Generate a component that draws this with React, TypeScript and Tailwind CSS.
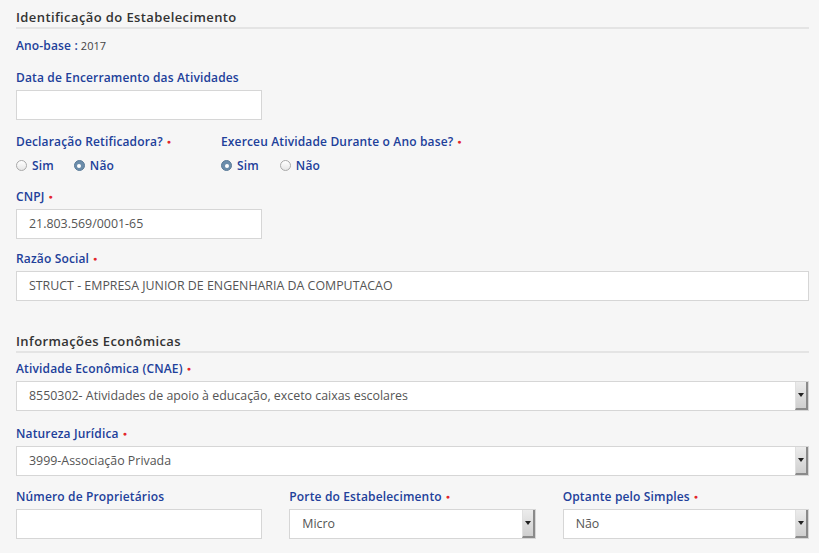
import React from "react";

const font = { fontFamily: '"Open Sans", "Liberation Sans", sans-serif' };

function Req() {
  return <span className="ml-[4px] text-[7px] text-[#e3262c] align-[2px]">●</span>;
}

function Label({ text, required }: { text: string; required?: boolean }) {
  return (
    <div className="text-[12px] leading-[17px] font-semibold tracking-[0.15px] text-[#21409a] whitespace-nowrap">
      {text}
      {required && <Req />}
    </div>
  );
}

function Input({ value, className = "" }: { value?: string; className?: string }) {
  return (
    <div
      className={`mt-[4px] h-[30px] border border-[#d6d6d6] bg-white px-[12px] flex items-center text-[12.4px] text-[#555] ${className}`}
    >
      {value}
    </div>
  );
}

function Select({ value }: { value: string }) {
  return (
    <div className="mt-[4px] h-[30px] border border-[#d6d6d6] bg-white flex items-stretch text-[12.4px] text-[#555]">
      <div className="flex-1 flex items-center px-[12px] whitespace-nowrap overflow-hidden">{value}</div>
      <div className="w-[13px] bg-gradient-to-b from-[#ececec] to-[#cfcfcf] border-r-2 border-b-2 border-[#8a8a8a] border-l border-l-[#e0e0e0] flex items-center justify-center">
        <span className="block w-0 h-0 border-l-[3px] border-r-[3px] border-t-[4px] border-l-transparent border-r-transparent border-t-[#222]" />
      </div>
    </div>
  );
}

function Radio({ label, checked }: { label: string; checked?: boolean }) {
  return (
    <div className="flex items-center">
      {checked ? (
        <span className="w-[11px] h-[11px] rounded-full bg-[#6b8dab] border border-[#5a7b98] flex items-center justify-center">
          <span className="w-[4px] h-[4px] rounded-full bg-white" />
        </span>
      ) : (
        <span className="w-[11px] h-[11px] rounded-full border border-[#a9a9a9] bg-gradient-to-b from-white to-[#e6e6e6]" />
      )}
      <span className="ml-[5px] text-[12px] font-semibold tracking-[0.15px] text-[#21409a]">{label}</span>
    </div>
  );
}

function Heading({ text }: { text: string }) {
  return (
    <div className="pt-[8px] pb-[1px] leading-[18px] text-[13px] font-semibold tracking-[0.4px] text-[#333] border-b-2 border-[#e4e4e4]">
      {text}
    </div>
  );
}

export default function App() {
  return (
    <div style={font} className="w-[819px] h-[553px] overflow-hidden bg-[#f6f6f6] pl-[16px] pr-[10px]">
      <Heading text="Identificação do Estabelecimento" />

      <div className="mt-[8px] leading-[17px] text-[12px]">
        <span className="font-semibold tracking-[0.15px] text-[#21409a]">Ano-base :</span>
        <span className="ml-[3px] text-[11px] text-[#444]">2017</span>
      </div>

      <div className="mt-[15px] w-[246px]">
        <Label text="Data de Encerramento das Atividades" />
        <Input />
      </div>

      <div className="mt-[13px] flex">
        <div className="w-[205px]">
          <Label text="Declaração Retificadora?" required />
          <div className="mt-[7px] flex gap-[20px] leading-[17px]">
            <Radio label="Sim" />
            <Radio label="Não" checked />
          </div>
        </div>
        <div>
          <Label text="Exerceu Atividade Durante o Ano base?" required />
          <div className="mt-[7px] flex gap-[21px] leading-[17px]">
            <Radio label="Sim" checked />
            <Radio label="Não" />
          </div>
        </div>
      </div>

      <div className="mt-[14px] w-[246px]">
        <Label text="CNPJ" required />
        <Input value="21.803.569/0001-65" />
      </div>

      <div className="mt-[11px]">
        <Label text="Razão Social" required />
        <Input value="STRUCT - EMPRESA JUNIOR DE ENGENHARIA DA COMPUTACAO" />
      </div>

      <div className="mt-[23px]">
        <Heading text="Informações Econômicas" />
      </div>

      <div className="mt-[7px]">
        <Label text="Atividade Econômica (CNAE)" required />
        <Select value="8550302- Atividades de apoio à educação, exceto caixas escolares" />
      </div>

      <div className="mt-[14px]">
        <Label text="Natureza Jurídica" required />
        <Select value="3999-Associação Privada" />
      </div>

      <div className="mt-[12px] grid grid-cols-3 gap-x-[27px]">
        <div>
          <Label text="Número de Proprietários" />
          <Input />
        </div>
        <div>
          <Label text="Porte do Estabelecimento" required />
          <Select value="Micro" />
        </div>
        <div>
          <Label text="Optante pelo Simples" required />
          <Select value="Não" />
        </div>
      </div>
    </div>
  );
}
